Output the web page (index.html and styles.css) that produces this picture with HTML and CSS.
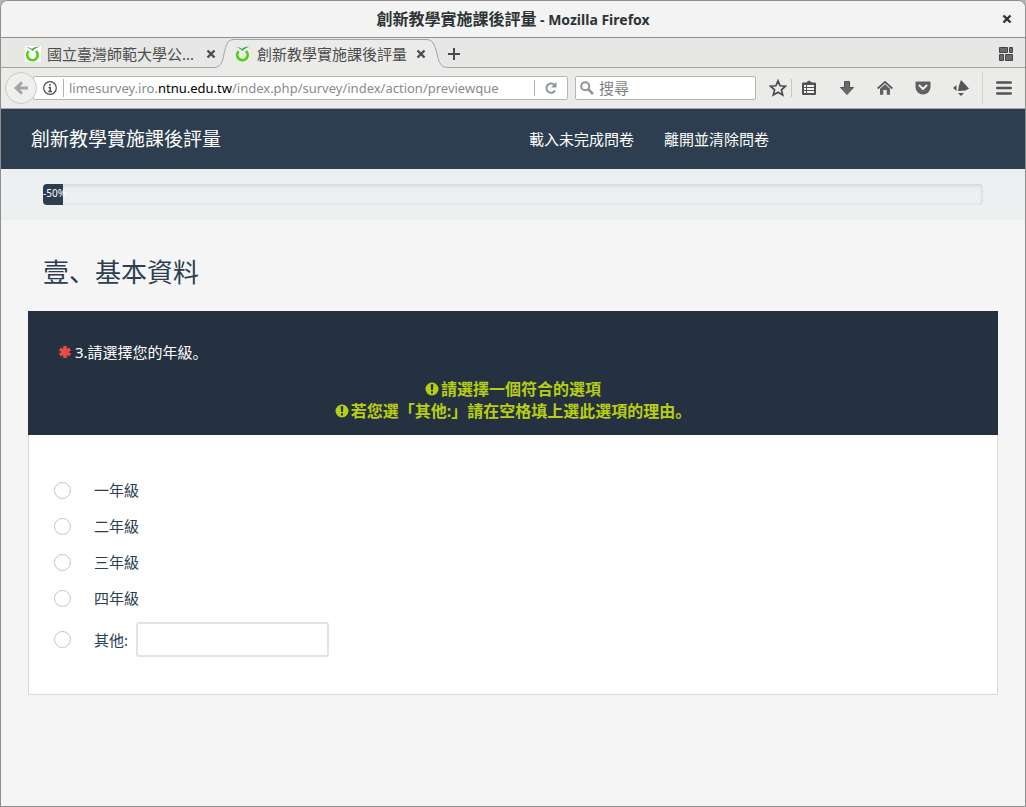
FILE: index.html
```html
<!DOCTYPE html>
<html lang="zh">
<head>
<meta charset="utf-8">
<meta name="viewport" content="width=device-width, initial-scale=1">
<title>創新教學實施課後評量</title>
<link rel="stylesheet" href="styles.css">
</head>
<body>
<svg class="defs" width="0" height="0" aria-hidden="true">
  <symbol id="lime" viewBox="0 0 16 16">
    <path d="M3.600 5.200A5.300 5.300 0 1 0 11 5" fill="none" stroke="#4fd00c" stroke-width="2.600"/>
    <path d="M1 1.200C4.500 .8 6.300 2.200 6.900 3.200C8.500 1.400 11.500 .5 14.500 .6C11 2 9 3 7.500 5C6.300 3.200 4 1.800 1 1.200Z" fill="#1fa03c"/>
  </symbol>
  <symbol id="cross" viewBox="0 0 10 10"><path d="M1.500 1.500L8.500 8.500M8.500 1.500L1.500 8.500" fill="none" stroke="currentColor" stroke-width="2.400"/></symbol>
  <symbol id="warn" viewBox="0 0 14 14"><path fill-rule="evenodd" fill="currentColor" d="M7 .5A6.500 6.500 0 1 0 7 13.500A6.500 6.500 0 1 0 7 .5ZM5.700 2.300H8.300L8 8H6ZM6 9.200H8V11.400H6Z"/></symbol>
</svg>
<div class="window">
  <header class="titlebar">
    <span class="window-title"><span class="page-name">創新教學實施課後評量</span> - Mozilla Firefox</span>
    <button class="icon-button window-close" aria-label="關閉視窗"><svg width="10" height="10"><use href="#cross"/></svg></button>
  </header>

  <div class="tabbar">
    <div class="tab">
      <svg class="favicon" width="16" height="16"><use href="#lime"/></svg>
      <span class="tab-label">國立臺灣師範大學公...</span>
      <button class="icon-button tab-close" aria-label="關閉分頁"><svg width="10" height="10"><use href="#cross"/></svg></button>
    </div>
    <svg class="edge" width="18" height="30" viewBox="0 0 18 30"><path d="M0 30V29.500C5 28 6.500 24 8 16C10 6 12 1.500 18 1.500V30Z" fill="#ebebe9"/><path d="M0 29.300C5 28 6.500 24 8 16C10 6 12 1.500 18 1.500" fill="none" stroke="#a0a3a8"/></svg>
    <div class="tab active">
      <svg width="16" height="16"><use href="#lime"/></svg>
      <span class="tab-label">創新教學實施課後評量</span>
      <button class="icon-button tab-close" aria-label="關閉分頁"><svg width="10" height="10"><use href="#cross"/></svg></button>
    </div>
    <svg class="edge" width="22" height="30" viewBox="0 0 22 30"><path d="M0 30V1.500C6 1.500 9 6 11 16C13 25 15 29.500 22 29.500V30Z" fill="#ebebe9"/><path d="M0 1.500C6 1.500 9 6 11 16C13 25 15 29.500 22 29.500" fill="none" stroke="#a0a3a8"/></svg>
    <div class="tab-rest">
      <button class="icon-button" aria-label="開新分頁"><svg width="12" height="12" viewBox="0 0 12 12"><path d="M6 0V12M0 6H12" stroke="#4a4a4a" stroke-width="2"/></svg></button>
      <button class="icon-button" aria-label="分頁群組"><svg width="14" height="14" viewBox="0 0 14 14"><path d="M.5 .5H8.500V5.500H.5ZM10.500 .5H13.500V5.500H10.500ZM.5 7.500H4.500V13.500H.5ZM6.500 7.500H13.500V13.500H6.500Z" fill="#6a6a6a" stroke="#454545"/></svg></button>
    </div>
  </div>

  <div class="toolbar">
    <button class="icon-button back" aria-label="上一頁"><svg width="14" height="14" viewBox="0 0 14 14"><path d="M0 7L7 .3L9 2.300L6 5.500H14V8.500H6L9 11.700L7 13.700Z" fill="#a5a5a5"/></svg></button>
    <div class="urlbar">
      <svg width="14" height="14" viewBox="0 0 14 14"><circle cx="7" cy="7" r="6.300" fill="none" stroke="#4c4c4c" stroke-width="1.200"/><path d="M7 3V4.700M5.500 6.500H7.200V10.500M5.300 10.400H9" fill="none" stroke="#4c4c4c" stroke-width="1.500"/></svg>
      <div class="url" role="textbox" aria-label="網址">limesurvey.iro.<b>ntnu.edu.tw</b>/index.php/survey/index/action/previewque</div>
      <button class="icon-button reload" aria-label="重新載入"><svg width="12" height="12" viewBox="0 0 12 12"><path d="M9.600 3.200A4.600 4.600 0 1 0 10 8.600" fill="none" stroke="#8898a8" stroke-width="2"/><path d="M11.500 0V5.500H6Z" fill="#8898a8"/></svg></button>
    </div>
    <label class="search">
      <svg width="14" height="14" viewBox="0 0 14 14"><circle cx="5.200" cy="5.200" r="4" fill="none" stroke="#949494" stroke-width="2"/><path d="M8 8L13 13" stroke="#949494" stroke-width="2.600"/></svg>
      <input type="search" placeholder="搜尋" aria-label="搜尋">
    </label>
    <button class="icon-button star" aria-label="加入書籤"><svg width="18" height="18" viewBox="0 0 18 18"><path d="M9 1.800L11.100 6.800L16.500 7.200L12.400 10.800L13.700 16L9 13.200L4.300 16L5.600 10.800L1.500 7.200L6.900 6.800Z" fill="none" stroke="#4c4c4c" stroke-width="1.700"/></svg></button>
    <button class="icon-button tool" aria-label="書籤清單"><svg width="16" height="16" viewBox="0 0 16 16"><path d="M2 2.500H5L8 .5L11 2.500H14Q15 2.500 15 3.500V14Q15 15 14 15H2Q1 15 1 14V3.500Q1 2.500 2 2.500Z" fill="#505050"/><path d="M3 5H5V7H3ZM6 5H13V7H6ZM3 8H5V10H3ZM6 8H13V10H6ZM3 11H5V13H3ZM6 11H13V13H6Z" fill="#f4f4f2"/></svg></button>
    <button class="icon-button tool" aria-label="下載"><svg width="16" height="16" viewBox="0 0 16 16"><path d="M5.500 1.500H10.500V7.500H14.500L8 14.500L1.500 7.500H5.500Z" fill="#6a6a6a" stroke="#505050"/></svg></button>
    <button class="icon-button tool" aria-label="首頁"><svg width="16" height="16" viewBox="0 0 16 16"><path d="M.7 8.500L8 1.800L15.300 8.500" fill="none" stroke="#555" stroke-width="1.700"/><path d="M3 8.800L8 4.300L13 8.800V14.800H9.700V10H6.300V14.800H3Z" fill="#606060"/></svg></button>
    <button class="icon-button tool" aria-label="Pocket"><svg width="16" height="16" viewBox="0 0 16 16"><path d="M1.500 1.500H14.500Q15.500 1.500 15.500 2.500V7A7.500 7.500 0 0 1 .5 7V2.500Q.5 1.500 1.500 1.500Z" fill="#606060"/><path d="M4.500 5.500L8 9L11.500 5.500" fill="none" stroke="#ebebe9" stroke-width="2" stroke-linecap="round"/></svg></button>
    <button class="icon-button tool" aria-label="附加元件"><svg width="16" height="16" viewBox="0 0 16 16"><path d="M8 0L16 8.500Q14 11 5 11Q6 4 8 0ZM3.500 5V11L0 8ZM5 13H11L8 16Z" fill="#555"/></svg></button>
    <button class="icon-button menu" aria-label="選單"><svg width="16" height="14" viewBox="0 0 16 14"><path d="M1.200 1.500H14.800M1.200 7H14.800M1.200 12.500H14.800" stroke="#555" stroke-width="2.600" stroke-linecap="round"/></svg></button>
  </div>

  <nav class="navbar">
    <a class="brand" href="#">創新教學實施課後評量</a>
    <div class="nav-links">
      <a href="#">載入未完成問卷</a>
      <a href="#">離開並清除問卷</a>
    </div>
  </nav>

  <div class="progress-area">
    <div class="progress"><div class="progress-fill" role="progressbar" aria-label="進度">-50%</div></div>
  </div>

  <main class="survey">
    <h1 class="group-title">壹、基本資料</h1>
    <section class="question">
      <header class="question-head">
        <p class="question-text"><svg width="14" height="14" viewBox="0 0 14 14"><path d="M7 1V13M1.800 4L12.200 10M12.200 4L1.800 10" stroke="#e74c3c" stroke-width="3.600"/></svg><span>3.請選擇您的年級。</span></p>
        <p class="hint"><svg width="14" height="14"><use href="#warn"/></svg><span>請選擇一個符合的選項</span></p>
        <p class="hint"><svg width="14" height="14"><use href="#warn"/></svg><span>若您選「其他:」請在空格填上選此選項的理由。</span></p>
      </header>
      <div class="answers">
        <label class="answer"><input type="radio" name="grade">一年級</label>
        <label class="answer"><input type="radio" name="grade">二年級</label>
        <label class="answer"><input type="radio" name="grade">三年級</label>
        <label class="answer"><input type="radio" name="grade">四年級</label>
        <div class="other">
          <label class="answer"><input type="radio" name="grade">其他:</label>
          <input class="other-text" type="text" aria-label="其他">
        </div>
      </div>
    </section>
  </main>
</div>
</body>
</html>
```
FILE: styles.css
```css
* { box-sizing: border-box; }

body {
  margin: 0;
  background: #b4b4b4;
  color: #2c3e50;
  font: 15px/20px "Noto Sans", "Noto Sans CJK SC", sans-serif;
}

p, h1 { margin: 0; font-weight: 400; }
svg { display: block; flex: none; }
.defs { position: absolute; }

.window {
  display: flex;
  flex-direction: column;
  min-height: 100vh;
  border: 1px solid #8e8e8e;
  border-radius: 8px 8px 0 0;
  background: #f5f5f5;
  overflow: hidden;
}

.icon-button {
  display: flex;
  align-items: center;
  justify-content: center;
  padding: 0;
  border: 0;
  background: none;
  color: #4c4c4c;
}

/* Window title */
.titlebar {
  display: grid;
  grid-template-columns: 24px 1fr 24px;
  align-items: center;
  height: 37px;
  padding: 0 6px;
  border-bottom: 1px solid #8e908e;
  background: #f3f3f3;
  color: #2e3436;
}
.window-title {
  grid-column: 2;
  text-align: center;
  font-size: 14px;
  font-weight: 700;
}
.page-name { font-size: 16px; }
.window-close { color: #2e3436; }

/* Tabs */
.tabbar { display: flex; height: 30px; background: #e7e7e5; color: #4c4c4c; }
.tab {
  display: flex;
  align-items: center;
  gap: 6px;
  padding: 2px 0 0 24px;
  border-bottom: 1px solid #a0a3a0;
}
.tab-label { width: 153px; white-space: nowrap; }
.active {
  padding: 0 0 0 1px;
  border-top: 1px solid #a0a3a8;
  border-bottom: 0;
  margin-top: 1px;
  background: #ebebe9;
}
.favicon { background: #fff; }
.tab-rest {
  display: flex;
  flex: 1;
  justify-content: space-between;
  padding: 2px 12px 0 0;
  border-bottom: 1px solid #a0a3a0;
}

/* Toolbar */
.toolbar {
  display: flex;
  align-items: center;
  height: 41px;
  padding-left: 4px;
  border-bottom: 1px solid #a6a6a2;
  background: #ebebe9;
}
.back {
  z-index: 1;
  width: 32px;
  height: 32px;
  margin-right: -4px;
  border: 1px solid #c8c8c6;
  border-radius: 50%;
  background: #efefed;
}
.urlbar, .search {
  display: flex;
  align-items: center;
  height: 24px;
  border: 1px solid #b4b6b0;
  border-radius: 2px;
  background: #fff;
}
.urlbar { flex: 1; min-width: 0; padding-left: 9px; gap: 6px; }
.url {
  flex: 1;
  min-width: 0;
  padding-left: 5px;
  border-left: 1px solid #b0b0b0;
  line-height: 18px;
  font-size: 13px;
  color: #8a8a8a;
  white-space: nowrap;
  overflow: hidden;
}
.url b { font-weight: 400; color: #000; }
.reload { width: 33px; height: 16px; border-left: 1px solid #b0b0b0; }
.search { width: 181px; margin-left: 7px; padding-left: 4px; gap: 5px; }
.search input {
  width: 100%;
  min-width: 0;
  padding: 0;
  border: 0;
  outline: 0;
  background: none;
  font: inherit;
}
.search input::placeholder { color: #7f7f7f; }
.star { width: 36px; height: 18px; padding-left: 8px; border-right: 1px solid #c8c8c6; }
.tool { width: 34px; height: 30px; margin-right: 4px; }
.menu { width: 43px; height: 32px; border-left: 1px solid #d2d2d0; }

/* Survey navigation */
.navbar {
  display: flex;
  align-items: center;
  justify-content: space-between;
  height: 60px;
  padding: 0 25% 0 30px;
  background: #2c3e50;
}
.navbar a { color: #fff; text-decoration: none; }
.brand { font-size: 19px; line-height: 26px; }
.nav-links { display: flex; gap: 30px; }

.progress-area { padding: 15px 42px; background: #ecf0f1; }
.progress {
  height: 21px;
  border-radius: 4px;
  box-shadow: inset 0 1px 4px #00000026;
}
.progress-fill {
  width: 20px;
  height: 21px;
  border-radius: 4px 0 0 4px;
  background: #2c3e50;
  color: #fff;
  font-size: 10px;
  line-height: 19px;
  white-space: nowrap;
}

.survey { padding: 36px 27px 0; }
.group-title {
  margin: 0 0 22px 15px;
  font-size: 26px;
  line-height: 33px;
}

/* Question */
.question-head {
  padding: 31px 30px 13px;
  background: #253140;
  color: #fff;
}
.question-text { display: flex; align-items: center; gap: 3px; margin-bottom: 16px; }
.hint {
  display: flex;
  align-items: center;
  justify-content: center;
  gap: 2px;
  color: #b8ce12;
  font-size: 16px;
  line-height: 22px;
  font-weight: 700;
}
.answers {
  display: flex;
  flex-direction: column;
  align-items: flex-start;
  gap: 16px;
  padding: 45px 25px 37px;
  border: 1px solid #d8d8d8;
  border-top: 0;
  background: #fff;
}
.answer { display: flex; align-items: center; line-height: 20px; }
.answer input {
  appearance: none;
  width: 17px;
  height: 17px;
  margin: 0 23px 0 0;
  border: 1px solid #c4c4c4;
  border-radius: 50%;
  background: #fff;
}
.answer input:checked { border: 5px solid #2c3e50; }
.other { display: flex; align-items: center; gap: 8px; margin-top: -2px; }
.other-text {
  width: 193px;
  height: 35px;
  padding: 0 12px;
  border: 2px solid #dce4ec;
  border-radius: 3px;
  font: inherit;
  color: inherit;
}
```
